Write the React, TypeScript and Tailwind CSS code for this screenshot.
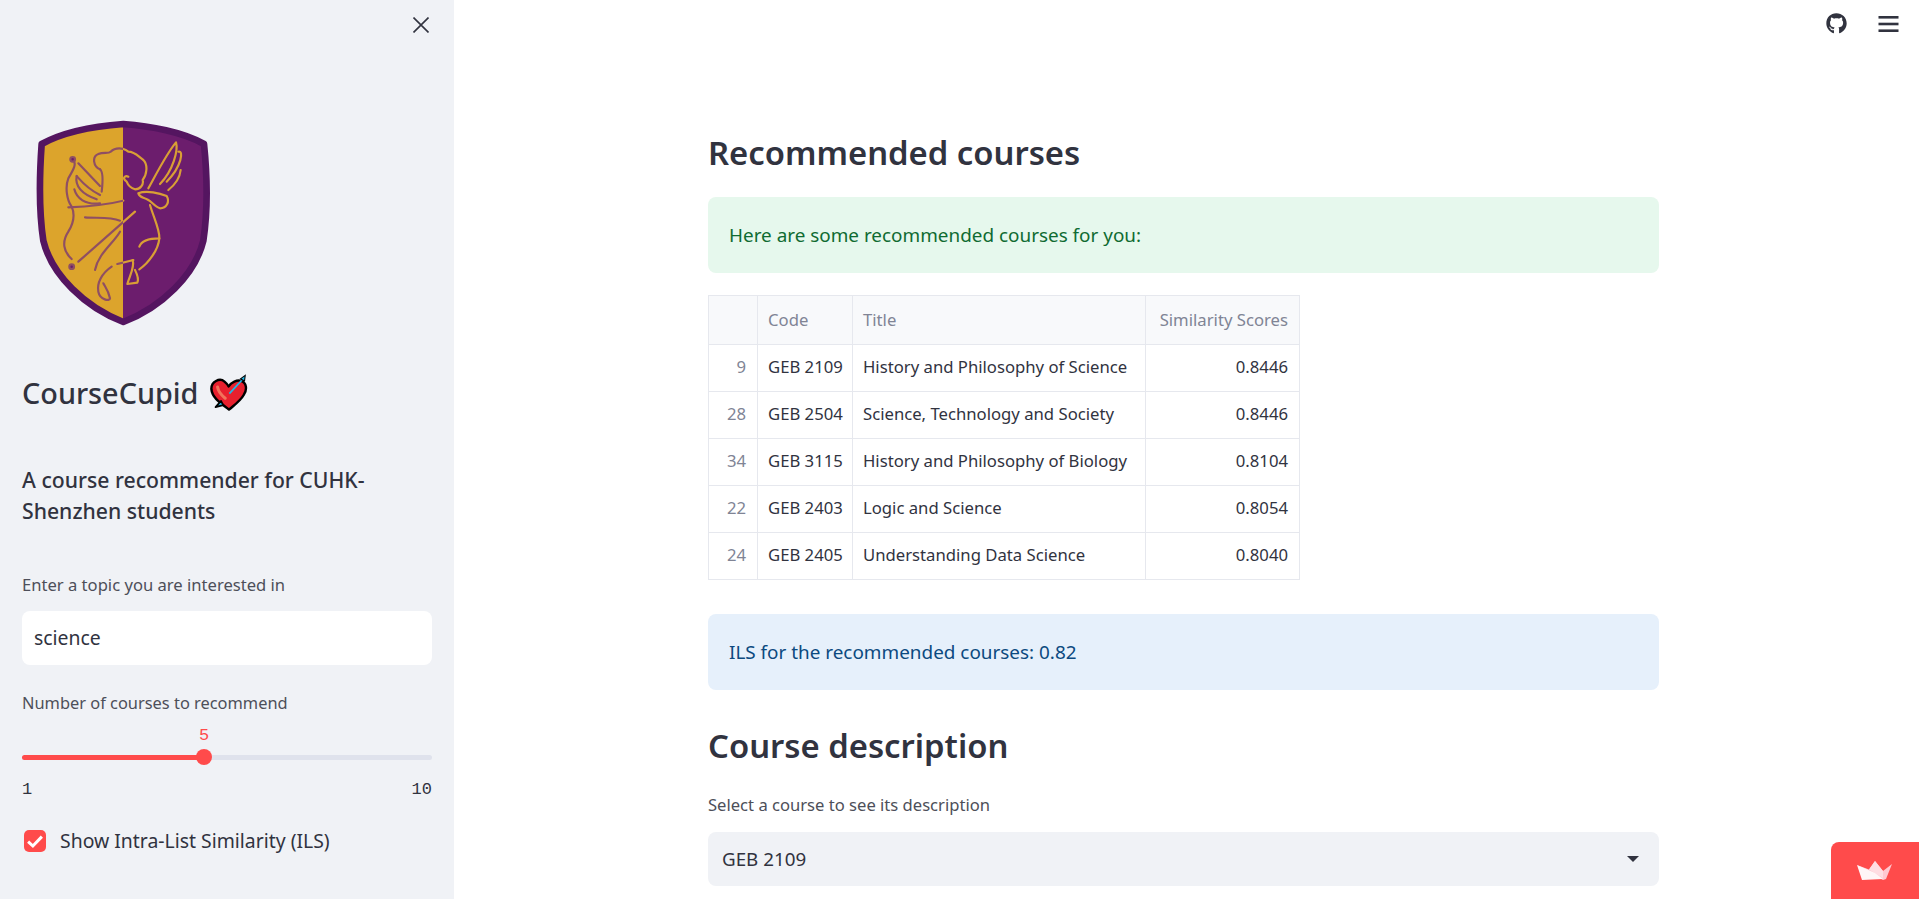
import { FaGithub } from 'react-icons/fa';

const courses = [
	{ id: 9, code: 'GEB 2109', title: 'History and Philosophy of Science', score: '0.8446' },
	{ id: 28, code: 'GEB 2504', title: 'Science, Technology and Society', score: '0.8446' },
	{ id: 34, code: 'GEB 3115', title: 'History and Philosophy of Biology', score: '0.8104' },
	{ id: 22, code: 'GEB 2403', title: 'Logic and Science', score: '0.8054' },
	{ id: 24, code: 'GEB 2405', title: 'Understanding Data Science', score: '0.8040' },
];

const cupidStrokes = [
	'M175 160 L240 228',
	'M175 455 L345 305',
	'M158 148 C172 160 160 180 145 205 C135 230 140 270 155 290 C165 312 160 340 145 365 C125 395 130 425 155 447',
	'M240 178 C220 170 215 140 235 132 C250 125 265 132 272 125 C285 112 310 112 325 125 C345 125 355 140 370 150 C385 165 380 195 368 210 C372 225 360 238 345 238 C335 235 325 228 320 215 C305 205 315 195 325 200',
	'M240 178 C250 185 248 220 245 245',
	'M170 198 C185 215 200 235 240 255',
	'M170 198 C165 225 180 250 230 268',
	'M163 238 C170 265 195 285 240 280',
	'M145 292 C200 290 260 285 310 272',
	'M195 322 C230 325 270 320 300 332',
	'M385 235 C410 190 440 130 468 97 C475 120 460 180 420 222',
	'M475 125 C492 120 485 170 440 215',
	'M445 240 C470 220 480 200 482 180',
	'M355 250 C380 240 420 250 440 258 C450 275 440 295 420 295 C405 290 395 275 385 270 C370 260 360 265 355 250',
	'M390 285 C400 320 420 360 418 385 C390 385 365 390 358 410',
	'M418 385 C415 420 385 460 358 478',
	'M338 450 C345 470 330 495 322 522 L352 518 C358 505 350 490 345 480',
	'M292 462 L340 450',
	'M300 365 C280 400 235 430 225 480',
	'M275 470 C245 490 230 520 235 545 C240 570 270 575 270 565 C265 540 255 530 250 520',
];

function Shield() {
	const outline =
		'M310 42 C390 48 490 66 552 102 C562 200 564 300 550 392 C525 495 425 592 310 636 C195 592 95 495 70 392 C56 300 58 200 65 102 C130 66 230 48 310 42 Z';
	return (
		<svg
			viewBox="0 0 600 660"
			className="block h-[220px] w-[200px]"
		>
			<defs>
				<clipPath id="left-half">
					<rect
						x="0"
						y="0"
						width="309"
						height="660"
					/>
				</clipPath>
				<clipPath id="right-half">
					<rect
						x="309"
						y="0"
						width="291"
						height="660"
					/>
				</clipPath>
			</defs>
			<path
				d={outline}
				fill="#6c1d6d"
			/>
			<path
				d={outline}
				fill="#dca42c"
				clipPath="url(#left-half)"
			/>
			<path
				d={outline}
				fill="none"
				stroke="#541560"
				strokeWidth="20"
				strokeLinejoin="round"
			/>
			<g
				fill="none"
				strokeWidth="6.5"
				strokeLinecap="round"
				strokeLinejoin="round"
			>
				<g
					clipPath="url(#left-half)"
					stroke="#8f4f63"
				>
					{cupidStrokes.map((d) => (
						<path
							key={d}
							d={d}
						/>
					))}
					<circle
						cx="158"
						cy="148"
						r="7"
						fill="#6c1d6d"
					/>
					<circle
						cx="155"
						cy="470"
						r="7"
						fill="#6c1d6d"
					/>
				</g>
				<g
					clipPath="url(#right-half)"
					stroke="#d99f35"
				>
					{cupidStrokes.map((d) => (
						<path
							key={d}
							d={d}
						/>
					))}
				</g>
			</g>
		</svg>
	);
}

function HeartArrow() {
	return (
		<svg
			viewBox="60 40 110 110"
			className="ml-[12px] h-[38px] w-[38px]"
		>
			<path
				d="M115 143 C100 130 66 112 64 84 C63 62 88 50 102 62 C108 67 112 72 114 76 C122 64 138 56 150 60 C166 66 168 84 158 100 C148 118 130 130 115 143 Z"
				fill="#e8202e"
				stroke="#000"
				strokeWidth="7"
				strokeLinejoin="round"
			/>
			<path
				d="M82 78 C84 92 94 102 104 110"
				fill="none"
				stroke="#f2735b"
				strokeWidth="9"
				strokeLinecap="round"
			/>
			<path
				d="M116 97 L152 58"
				stroke="#1fb8e8"
				strokeWidth="5"
			/>
			<path
				d="M148 54 L162 44 L160 60 Z"
				fill="#1fb8e8"
				stroke="#000"
				strokeWidth="3"
			/>
			<path
				d="M92 118 L76 136 L98 130 Z"
				fill="#1fb8e8"
				stroke="#000"
				strokeWidth="5"
				strokeLinejoin="round"
			/>
		</svg>
	);
}

function Sidebar() {
	return (
		<aside className="flex h-full w-[454px] shrink-0 flex-col bg-[#f0f2f6] px-[22px]">
			<div className="flex justify-end pt-[17px] pr-[3px]">
				<svg
					viewBox="0 0 16 16"
					className="h-4 w-4"
					fill="none"
					stroke="#31333f"
					strokeWidth="1.6"
				>
					<path d="M0.5 0.5 L15.5 15.5 M15.5 0.5 L0.5 15.5" />
				</svg>
			</div>
			<div className="mt-[77px] -ml-[2px]">
				<Shield />
			</div>
			<div className="mt-[43px] flex h-[40px] items-center text-[28.8px] font-medium text-[#31333f]">
				CourseCupid
				<HeartArrow />
			</div>
			<h3 className="mt-[51px] text-[21.2px] leading-[31px] font-medium text-[#31333f]">
				A course recommender for CUHK-
				<br />
				Shenzhen students
			</h3>
			<label className="mt-[49px] block h-[20px] text-[16.6px] leading-[20px] text-[#4d4f59]">
				Enter a topic you are interested in
			</label>
			<div className="mt-[16px] flex h-[54px] items-center rounded-lg bg-white px-3 text-[19.4px] text-[#31333f]">science</div>
			<label className="mt-[28px] block h-[20px] text-[16.4px] leading-[20px] text-[#4d4f59]">Number of courses to recommend</label>
			<div className="relative mt-[42px] h-[5px] rounded-full bg-[#dfe2ec]">
				<div className="h-[5px] w-[182px] rounded-l-full bg-[#ff4b4b]" />
				<div className="absolute top-[-6px] left-[174px] h-4 w-4 rounded-full bg-[#ff4b4b]" />
				<div className="absolute top-[-29px] left-[174px] w-4 text-center font-['Liberation_Mono',monospace] text-[17px] leading-[20px] text-[#ff4b4b]">5</div>
			</div>
			<div className="mt-[20px] flex justify-between font-['Liberation_Mono',monospace] text-[17px] leading-[20px] text-[#31333f]">
				<span>1</span>
				<span>10</span>
			</div>
			<div className="mt-[26px] flex items-center pl-[2px] text-[19.4px] text-[#31333f]">
				<span className="flex h-[22px] w-[22px] items-center justify-center rounded-[5px] bg-[#ff4b4b]">
					<svg
						viewBox="0 0 16 16"
						className="h-[20px] w-[20px]"
						fill="none"
						stroke="#fff"
						strokeWidth="2.4"
					>
						<path d="M2.5 8.5 L6.3 12 L13.5 4.5" />
					</svg>
				</span>
				<span className="ml-[14px]">Show Intra-List Similarity (ILS)</span>
			</div>
		</aside>
	);
}

function CoursesTable() {
	const cell = 'border border-[#e6e8ee] pr-[11px] pl-[10px]';
	const bodyCell = `${cell} pb-[2px]`;
	return (
		<table className="w-[591px] table-fixed border-collapse text-[16.7px] text-[#31333f]">
			<thead className="bg-[#f8f9fb] text-[#808495]">
				<tr className="h-[49px]">
					<th className={`${cell} w-[49px] font-normal`} />
					<th className={`${cell} w-[95px] text-left font-normal`}>Code</th>
					<th className={`${cell} w-[293px] text-left font-normal`}>Title</th>
					<th className={`${cell} w-[154px] text-right font-normal whitespace-nowrap`}>Similarity Scores</th>
				</tr>
			</thead>
			<tbody>
				{courses.map((course) => (
					<tr
						key={course.id}
						className="h-[47px]"
					>
						<td className={`${bodyCell} text-right text-[#808495]`}>{course.id}</td>
						<td className={`${bodyCell} whitespace-nowrap`}>{course.code}</td>
						<td className={`${bodyCell} whitespace-nowrap`}>{course.title}</td>
						<td className={`${bodyCell} text-right`}>{course.score}</td>
					</tr>
				))}
			</tbody>
		</table>
	);
}

export default function App() {
	return (
		<div className="flex h-[899px] overflow-hidden bg-white font-['Noto_Sans',sans-serif]">
			<Sidebar />
			<main className="relative min-w-0 flex-1 pr-[260px] pl-[254px]">
				<div className="absolute top-[13px] right-[20px] flex items-center gap-[31px] text-[#31333f]">
					<FaGithub className="h-[21px] w-[21px]" />
					<svg
						viewBox="0 0 20 16"
						className="h-[16px] w-[21px]"
						fill="#31333f"
					>
						<rect
							y="0"
							width="20"
							height="2.6"
						/>
						<rect
							y="6.7"
							width="20"
							height="2.6"
						/>
						<rect
							y="13.4"
							width="20"
							height="2.6"
						/>
					</svg>
				</div>
				<h2 className="mt-[129px] h-[48px] text-[32.8px] leading-[48px] font-semibold text-[#31333f]">Recommended courses</h2>
				<div className="mt-[20px] flex h-[76px] items-center rounded-lg bg-[#e6f8ed] px-[21px] text-[18.9px] text-[#0f6b32]">
					Here are some recommended courses for you:
				</div>
				<div className="mt-[22px]">
					<CoursesTable />
				</div>
				<div className="mt-[34px] flex h-[76px] items-center rounded-lg bg-[#e6f0fb] px-[21px] text-[18.9px] text-[#0c4a80]">
					ILS for the recommended courses: 0.82
				</div>
				<h2 className="mt-[32px] h-[48px] text-[32.8px] leading-[48px] font-semibold text-[#31333f]">Course description</h2>
				<label className="mt-[25px] block h-[20px] text-[16.6px] leading-[20px] text-[#4d4f59]">Select a course to see its description</label>
				<div className="mt-[17px] flex h-[54px] items-center justify-between rounded-lg bg-[#f0f2f6] pr-[20px] pl-[14px] text-[18.8px] text-[#31333f]">
					GEB 2109
					<span className="h-0 w-0 border-x-[6px] border-t-[6px] border-x-transparent border-t-[#31333f]" />
				</div>
			</main>
			<div className="fixed right-0 bottom-0 flex h-[57px] w-[88px] items-center justify-center rounded-tl-lg bg-[#ff4b4b]">
				<svg
					viewBox="0 0 36 19"
					className="h-[19px] w-[36px]"
				>
					<path
						d="M0 4 L12 8.5 L18 0 L26 10 L35 3 L29 18 L26 19 Z"
						fill="#ffc8d0"
					/>
					<path
						d="M12 8.5 L18 0 L26 10 L26 17 Z"
						fill="#ffdde2"
					/>
					<path
						d="M0 4 L18 12 L26 18 L5 19 Z"
						fill="#fff6f7"
					/>
				</svg>
			</div>
		</div>
	);
}
